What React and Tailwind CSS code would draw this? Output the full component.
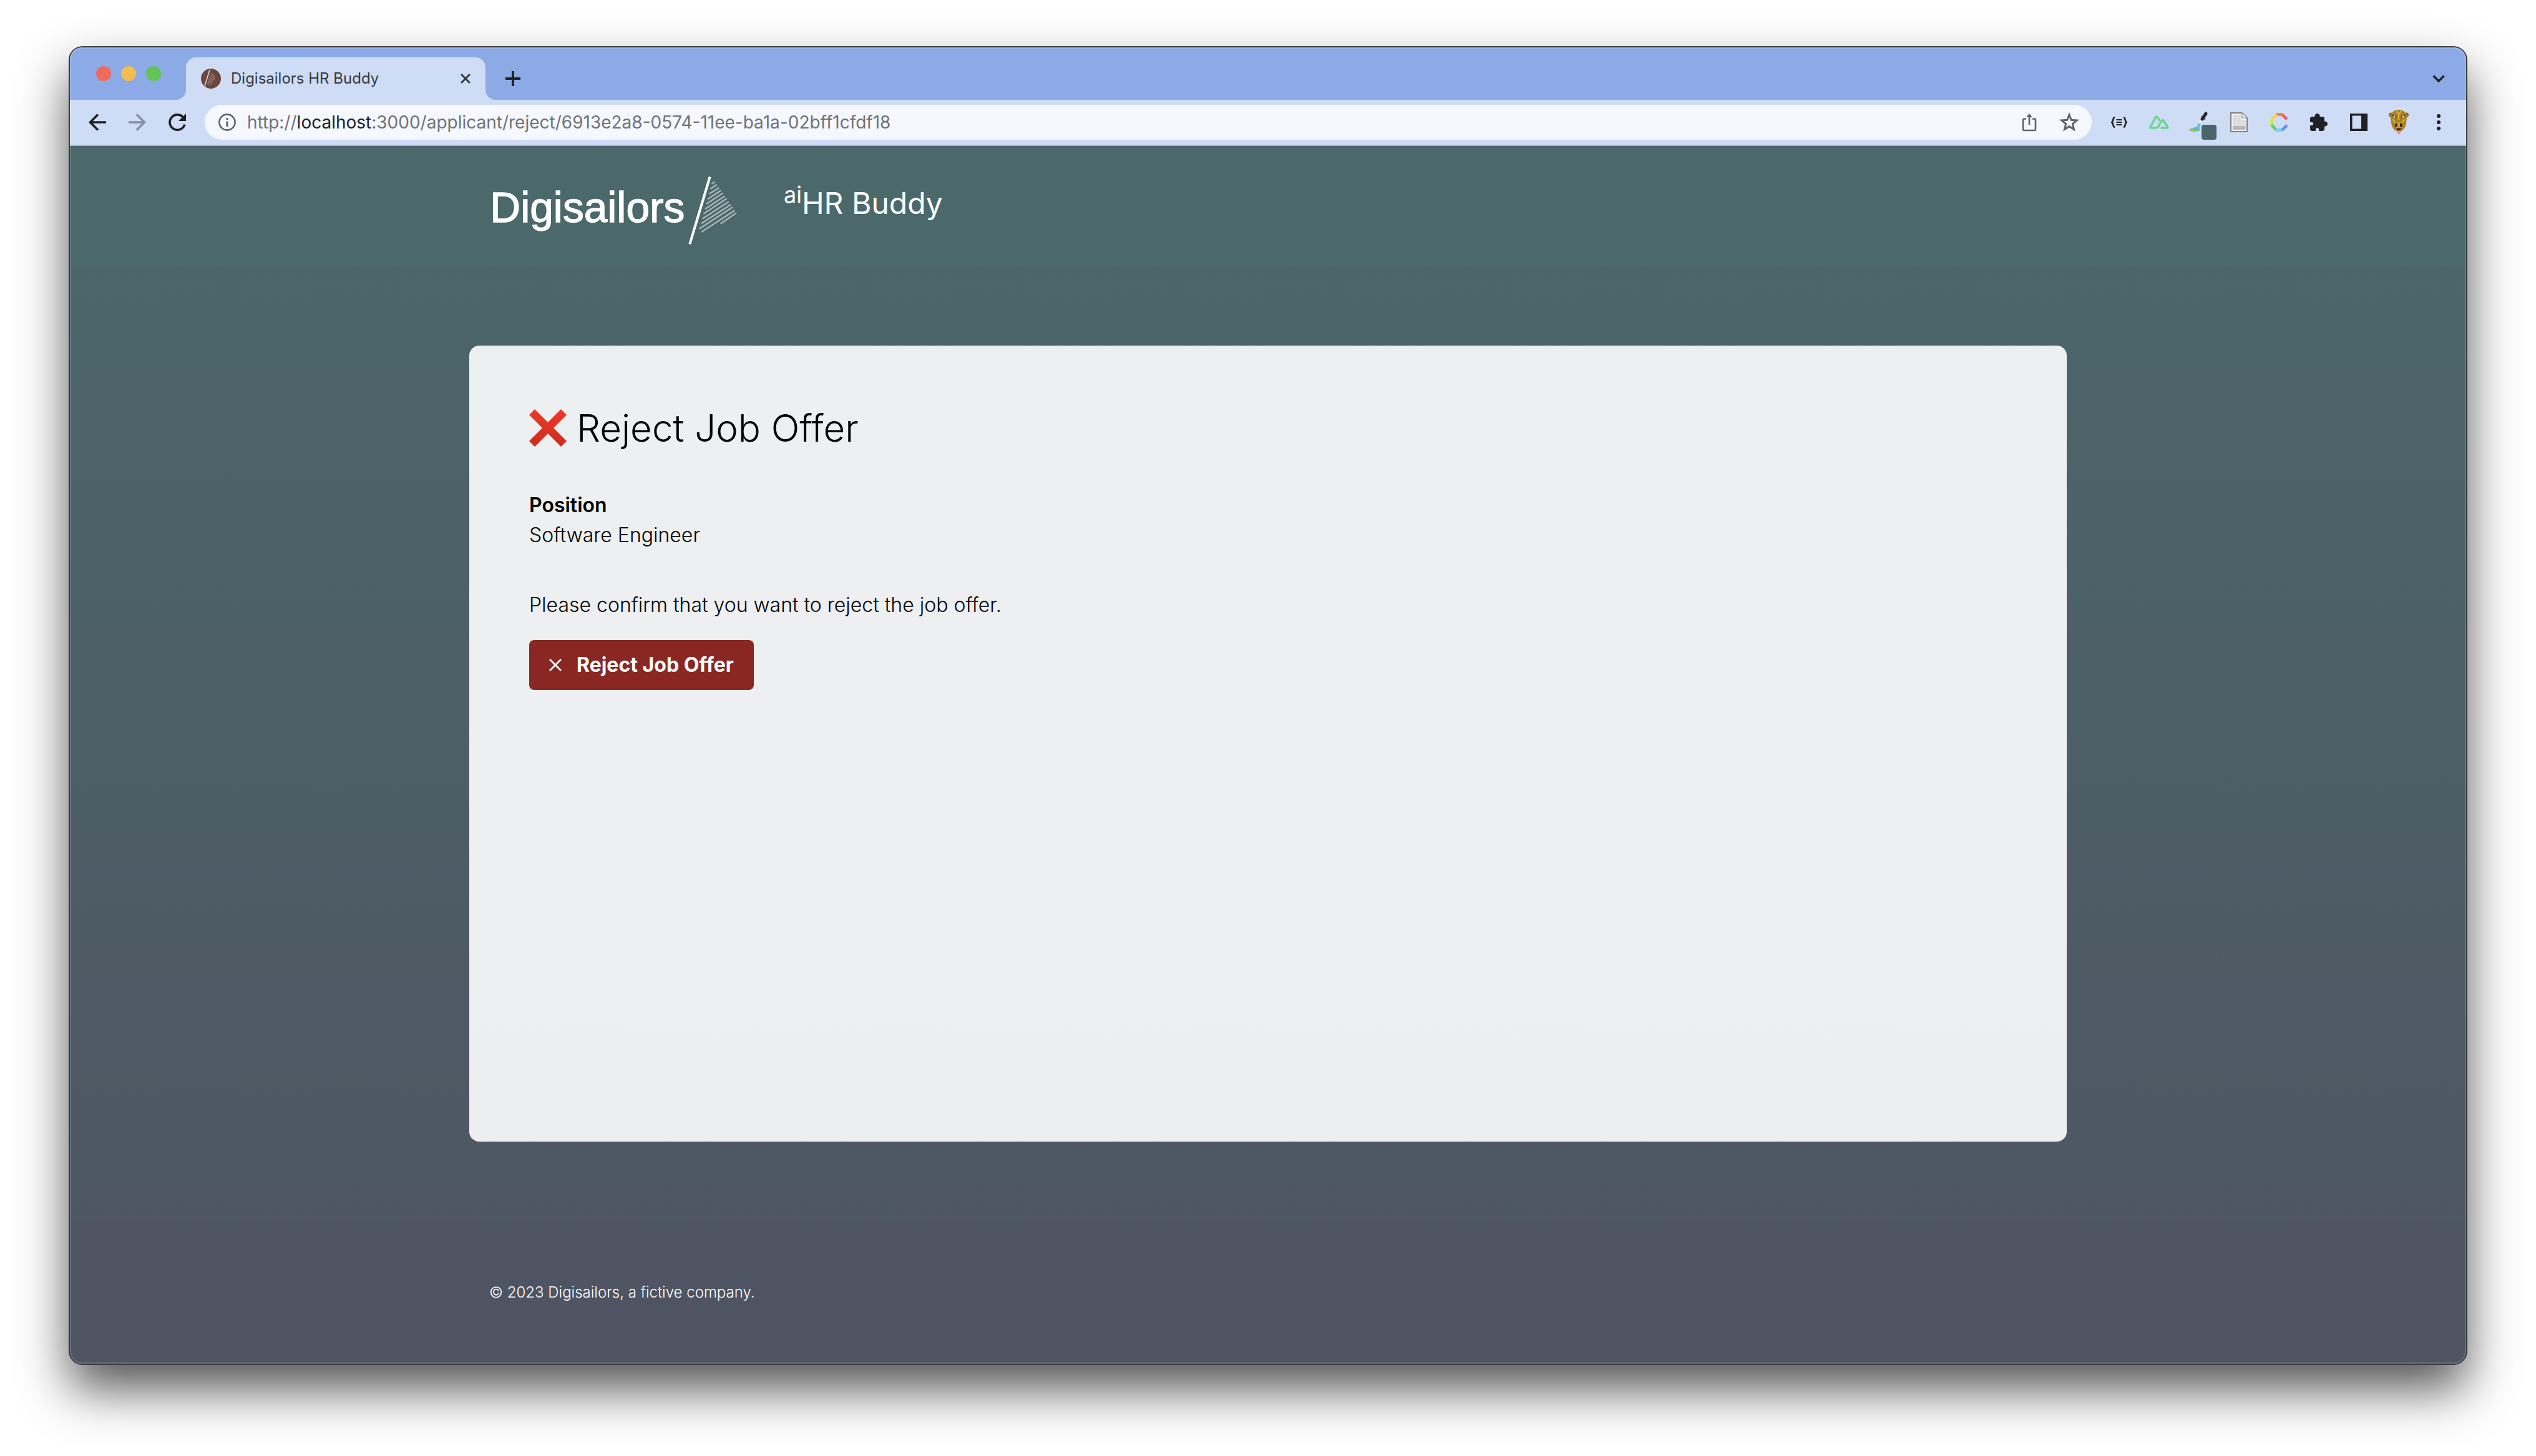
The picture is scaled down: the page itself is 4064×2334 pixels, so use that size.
import React from "react";
import { IoExtensionPuzzle } from "react-icons/io5";

const HATCH = [
  [1202, 134, 1217, 124],
  [1195, 158, 1227, 138],
  [1189, 183, 1237, 152],
  [1182, 208, 1246, 166],
  [1176, 231, 1255, 179],
  [1170, 255, 1265, 193],
  [1162, 278, 1274, 205],
  [1157, 302, 1283, 220],
  [1152, 325, 1293, 234],
  [1142, 350, 1302, 246],
  [1152, 366, 1312, 262],
  [1244, 326, 1320, 274],
];

function Logo() {
  return (
    <svg viewBox="132 96 1200 330" className="h-[110px] w-[400px]" role="img" aria-label="Digisailors">
      <text x="136" y="318" fontSize="203" fill="#fff" stroke="#fff" strokeWidth="4" className="font-['Liberation_Sans',sans-serif]">
        Digisailors
      </text>
      <path d="M1193 100L1096 424" stroke="#fff" strokeWidth="12" />
      {HATCH.map((l, i) => (
        <line key={i} x1={l[0]} y1={l[1]} x2={l[2]} y2={l[3]} stroke="#a9b7ba" strokeWidth="7" />
      ))}
    </svg>
  );
}

function IconButton({ label, children }) {
  return (
    <button type="button" aria-label={label} className="flex h-14 w-16 shrink-0 items-center justify-center text-[#202124]">
      {children}
    </button>
  );
}

function Browser() {
  return (
    <>
      <div className="flex h-[84px] shrink-0 items-end bg-[#8caae5] pr-3">
        <div className="mb-[30px] ml-[42px] flex gap-4">
          <button type="button" aria-label="Close window" className="size-6 rounded-full bg-[#ee6a5f]" />
          <button type="button" aria-label="Minimise window" className="size-6 rounded-full bg-[#f5bd4f]" />
          <button type="button" aria-label="Zoom window" className="size-6 rounded-full bg-[#61c455]" />
        </div>
        <svg viewBox="0 0 16 16" className="ml-6 size-4"><path d="M16 0V16H0A16 16 0 0 0 16 0Z" fill="#cfdcf6" /></svg>
        <div className="flex h-[68px] w-[480px] items-center rounded-t-2xl bg-[#cfdcf6] pr-5 pl-6">
          <svg viewBox="0 0 32 32" className="size-8 shrink-0">
            <circle cx="16" cy="16" r="16" fill="#6b463f" />
            <path d="M14 2L6 28" stroke="#e0d6d3" strokeWidth="1.6" />
            <path d="M15 8l2-1M14 12l5-3M13 15l8-5M12 18l10-6M11 21l12-7M10 24l13-8M12 26l8-5" stroke="#a38c86" strokeWidth="1" />
          </svg>
          <span className="ml-4 flex-1 text-2xl whitespace-nowrap text-[#35383d]">Digisailors HR Buddy</span>
          <button type="button" aria-label="Close tab" className="flex size-6 items-center justify-center">
            <svg viewBox="0 0 16 16" className="size-4"><path d="M1 1L15 15M15 1L1 15" stroke="#35383d" strokeWidth="3" /></svg>
          </button>
        </div>
        <svg viewBox="0 0 16 16" className="size-4"><path d="M0 0V16H16A16 16 0 0 1 0 0Z" fill="#cfdcf6" /></svg>
        <button type="button" aria-label="New tab" className="flex h-[68px] w-14 items-center justify-center">
          <svg viewBox="0 0 24 24" className="size-6"><path d="M12 0V24M0 12H24" stroke="#202124" strokeWidth="3.8" /></svg>
        </button>
        <div className="ml-auto flex h-[68px] items-center">
          <IconButton label="Search tabs">
            <svg viewBox="0 0 20 12" className="w-5"><path d="M1.5 1.5L10 10L18.5 1.5" fill="none" stroke="currentColor" strokeWidth="3.4" /></svg>
          </IconButton>
        </div>
      </div>
      <div className="flex h-[74px] shrink-0 items-center border-b-2 border-[#abb6cf] bg-[#cfdcf6] px-3">
        <IconButton label="Back">
          <svg viewBox="0 0 28 28" className="size-7"><path d="M28 14H3M15 1.5L2.5 14L15 26.5" fill="none" stroke="currentColor" strokeWidth="3.6" /></svg>
        </IconButton>
        <IconButton label="Forward">
          <svg viewBox="0 0 28 28" className="size-7 text-[#858d9e]"><path d="M0 14H25M13 1.5L25.5 14L13 26.5" fill="none" stroke="currentColor" strokeWidth="3.4" /></svg>
        </IconButton>
        <IconButton label="Reload">
          <svg viewBox="0 0 28 28" className="size-7"><path d="M26 17.5A12.2 12.2 0 1 1 23 5.5" fill="none" stroke="currentColor" strokeWidth="3.6" /><path d="M28 0V12H16Z" fill="currentColor" /></svg>
        </IconButton>
        <div className="mx-3 flex h-14 min-w-0 flex-1 items-center rounded-full bg-[#f5f8fe] pr-1 pl-[22px]">
          <svg viewBox="0 0 28 28" className="size-7 shrink-0">
            <circle cx="14" cy="14" r="12.6" fill="none" stroke="#5f6368" strokeWidth="2.6" />
            <path d="M14 12.5V21M14 7V10" stroke="#5f6368" strokeWidth="3" />
          </svg>
          <div className="ml-[18px] flex-1 truncate text-[28px] text-[#6f7276]">
            http://<span className="text-[#202124]">localhost</span>:3000/applicant/reject/6913e2a8-0574-11ee-ba1a-02bff1cfdf18
          </div>
          <IconButton label="Share">
            <svg viewBox="0 0 24 30" className="h-[30px] w-6" fill="none" stroke="#5f6368" strokeWidth="2.6">
              <path d="M7 9.5H4A2 2 0 0 0 2 11.5V26A2 2 0 0 0 4 28H20A2 2 0 0 0 22 26V11.5A2 2 0 0 0 20 9.5H17M12 19V4" />
              <path d="M7 7L12 1L17 7Z" fill="#5f6368" stroke="none" />
            </svg>
          </IconButton>
          <IconButton label="Bookmark">
            <svg viewBox="0 0 28 28" className="size-8"><path d="M14 3.5L16.9 10.8L24.7 11.3L18.7 16.3L20.6 24L14 19.8L7.4 24L9.3 16.3L3.3 11.3L11.1 10.8Z" fill="none" stroke="#5f6368" strokeWidth="2.6" /></svg>
          </IconButton>
        </div>
        <IconButton label="JSON formatter">
          <svg viewBox="0 0 26 18" className="w-[26px]" fill="none" stroke="#202124" strokeWidth="2.6">
            <path d="M6 1.3C2 1.3 4.5 8 1 9C4.5 10 2 16.7 6 16.7M20 1.3C24 1.3 21.5 8 25 9C21.5 10 24 16.7 20 16.7" />
            <path d="M8.5 5H17.5M8.5 9H17.5M8.5 13H17.5" strokeWidth="2.2" />
          </svg>
        </IconButton>
        <IconButton label="Nuxt devtools">
          <svg viewBox="0 0 32 22" className="w-8" fill="none" stroke="#63d98c" strokeWidth="3.4" strokeLinejoin="round" strokeLinecap="round">
            <path d="M10.5 20H3Q1.2 20 2 18.5L10.5 3Q12 1 13.5 3L16 7.5M10.5 20Q13.5 20 15 17.5L20 8.5Q21.5 6.5 23 8.5L29.7 18.5Q30.5 20 29 20H20" />
          </svg>
        </IconButton>
        <IconButton label="Colour picker">
          <svg viewBox="0 -12 44 56" className="ml-3 h-14 w-11">
            <ellipse cx="9" cy="28" rx="9" ry="3" fill="#86c46a" />
            <ellipse cx="12" cy="26" rx="5" ry="2.5" fill="#4fbfd0" />
            <path d="M14 26L17 18" stroke="#5fbfe8" strokeWidth="4" />
            <path d="M17.5 17L21 10" stroke="#f4f6fa" strokeWidth="4.5" />
            <path d="M21 11L27 2" stroke="#26282c" strokeWidth="5" strokeLinecap="round" />
            <path d="M19.5 7L26 11.5" stroke="#26282c" strokeWidth="2" />
            <rect x="20" y="20" width="24" height="24" rx="4" fill="#4b666a" />
          </svg>
        </IconButton>
        <IconButton label="Page notes">
          <svg viewBox="0 0 28 32" className="h-8 w-7">
            <path d="M1 1H19L27 9V31H1Z" fill="#f4f4f4" stroke="#7e8288" strokeWidth="2" />
            <path d="M4 4H18V12H25V28H4Z" fill="#dedede" />
            <path d="M19 1V9H27Z" fill="#fff" stroke="#7e8288" strokeWidth="1" />
            <rect x="5" y="23" width="18" height="4" fill="#bdbdbd" stroke="#999" />
          </svg>
        </IconButton>
        <IconButton label="Colour wheel">
          <svg viewBox="0 0 28 30" className="h-[30px] w-7" fill="none" strokeWidth="4.8">
            <path d="M27 10L19 2.5" stroke="#ee5f5f" />
            <path d="M20 2.5H9.5" stroke="#f0883e" />
            <path d="M10.5 2.5L2 10.5" stroke="#f8cf68" />
            <path d="M2.5 9.5V20" stroke="#c8f04a" />
            <path d="M2 19L10 27.5" stroke="#6fd06a" />
            <path d="M9 27.5H20" stroke="#6ed5fa" />
            <path d="M19 27.5L27 20" stroke="#6d8fd6" />
          </svg>
        </IconButton>
        <IconButton label="Extensions"><IoExtensionPuzzle className="size-8" /></IconButton>
        <IconButton label="Side panel">
          <svg viewBox="0 0 28 28" className="size-7"><path d="M0 0H28V28H0ZM3.5 3.5V24.5H18V3.5Z" fill="currentColor" fillRule="evenodd" /></svg>
        </IconButton>
        <IconButton label="Profile">
          <svg viewBox="0 0 32 42" className="h-[42px] w-8">
            <circle cx="3.5" cy="9" r="3.5" fill="#8f6f1c" />
            <circle cx="28.5" cy="9" r="3.5" fill="#8f6f1c" />
            <path d="M16 1C24 1 29 6 29 13L28 22C27 30 22 36 16 36C10 36 5 30 4 22L3 13C3 6 8 1 16 1Z" fill="#a87e1e" />
            <path d="M12 3L16 8L20 3M6 16L11 22M26 16L21 22M16 8V17" stroke="#d9b03c" strokeWidth="2.4" fill="none" />
            <path d="M6 10L12 13M26 10L20 13" stroke="#3f3210" strokeWidth="2.4" />
            <circle cx="9" cy="12" r="1.5" fill="#fff" />
            <circle cx="23" cy="12" r="1.5" fill="#fff" />
            <path d="M12 23Q16 17 20 23L21 29Q16 33 11 29Z" fill="#c99b2c" />
            <path d="M12 23V28M19.5 23V28M13 32H19" stroke="#2b200b" strokeWidth="3" />
            <path d="M10 33Q16 37 22 33L19 38Q16 43 14 38Z" fill="#d99a96" />
          </svg>
        </IconButton>
        <IconButton label="Menu">
          <svg viewBox="0 0 6 26" className="h-[26px]" fill="currentColor"><circle cx="3" cy="3" r="3" /><circle cx="3" cy="13" r="3" /><circle cx="3" cy="23" r="3" /></svg>
        </IconButton>
      </div>
    </>
  );
}

export default function App() {
  return (
    <div className="flex min-h-screen flex-col bg-white px-28 pt-[76px] pb-[148px] font-['Inter',sans-serif]">
      <div className="flex flex-1 flex-col rounded-[20px] shadow-[0_0_0_2px_#3c3c3c,0_40px_80px_rgba(0,0,0,0.68)]">
        <div className="relative flex flex-1 flex-col overflow-hidden rounded-[20px] after:pointer-events-none after:absolute after:inset-0 after:rounded-[20px] after:border-2 after:border-white/15">
          <Browser />
          <div className="flex flex-1 flex-col bg-linear-to-b from-[#4b686b] to-[#4e5462]">
            <header className="bg-[#4b686b]">
              <div className="mx-auto flex min-h-[192px] w-full max-w-[2560px] items-start gap-[72px] px-8 pt-12">
                <a href="#home"><Logo /></a>
                <p className="text-5xl leading-[88px] text-white"><sup>ai</sup>HR Buddy</p>
              </div>
            </header>
            <main className="mx-auto flex w-full max-w-[2560px] flex-1 flex-col py-32">
              <section className="flex-1 rounded-2xl bg-white/90 p-24 text-[32px] leading-[48px] font-light text-black">
                <h1 className="flex items-center gap-4 text-6xl leading-[72px]">
                  <svg viewBox="0 0 60 60" className="size-[60px]" aria-hidden="true">
                    <defs>
                      <linearGradient id="cross" x1="0" y1="0" x2="0" y2="1">
                        <stop offset="0" stopColor="#ec3a28" />
                        <stop offset="1" stopColor="#cf2b20" />
                      </linearGradient>
                    </defs>
                    <path d="M9 0L30 21L51 0L60 9L39 30L60 51L51 60L30 39L9 60L0 51L21 30L0 9Z" fill="url(#cross)" />
                  </svg>
                  Reject Job Offer
                </h1>
                <dl className="mt-16">
                  <dt className="font-semibold">Position</dt>
                  <dd>Software Engineer</dd>
                </dl>
                <p className="mt-16">Please confirm that you want to reject the job offer.</p>
                <button type="button" className="mt-8 flex items-center gap-6 rounded-lg bg-[#8a2722] px-8 py-4 font-bold text-white">
                  <svg viewBox="0 0 20 20" className="size-5"><path d="M1 1L19 19M19 1L1 19" stroke="currentColor" strokeWidth="2.8" /></svg>
                  Reject Job Offer
                </button>
              </section>
            </main>
            <footer className="bg-[#4e5462] py-24">
              <p className="mx-auto w-full max-w-[2560px] px-8 text-2xl leading-9 font-light text-white">© 2023 Digisailors, a fictive company.</p>
            </footer>
          </div>
        </div>
      </div>
    </div>
  );
}
